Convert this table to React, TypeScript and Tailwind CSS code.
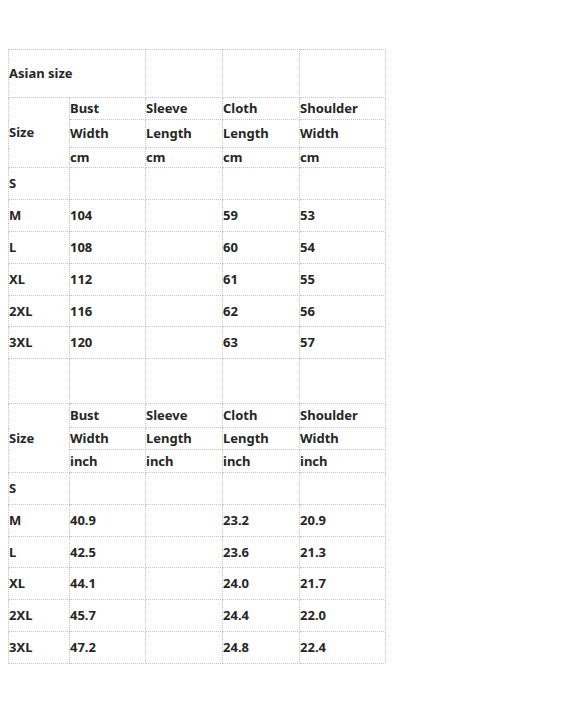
const cm = [
  ["S", "", "", "", ""],
  ["M", "104", "", "59", "53"],
  ["L", "108", "", "60", "54"],
  ["XL", "112", "", "61", "55"],
  ["2XL", "116", "", "62", "56"],
  ["3XL", "120", "", "63", "57"],
]

const inch = [
  ["S", "", "", "", ""],
  ["M", "40.9", "", "23.2", "20.9"],
  ["L", "42.5", "", "23.6", "21.3"],
  ["XL", "44.1", "", "24.0", "21.7"],
  ["2XL", "45.7", "", "24.4", "22.0"],
  ["3XL", "47.2", "", "24.8", "22.4"],
]

const cm_h = ["h-[32px]", "h-[32px]", "h-[32px]", "h-[32px]", "h-[31px]", "h-[32px]"]
const inch_h = ["h-[32px]", "h-[32px]", "h-[31px]", "h-[32px]", "h-[32px]", "h-[32px]"]

const td = "border border-dotted border-[#c4c4c4] p-0 align-middle text-left"

function Header({ unit, hs }: { unit: string; hs: string[] }) {
  return (
    <>
      <tr className={hs[0]}>
        <td rowSpan={3} className={td}>Size</td>
        <td className={td}>Bust</td>
        <td className={td}>Sleeve</td>
        <td className={td}>Cloth</td>
        <td className={td}>Shoulder</td>
      </tr>
      <tr className={hs[1]}>
        <td className={td}>Width</td>
        <td className={td}>Length</td>
        <td className={td}>Length</td>
        <td className={td}>Width</td>
      </tr>
      <tr className={hs[2]}>
        <td className={td}>{unit}</td>
        <td className={td}>{unit}</td>
        <td className={td}>{unit}</td>
        <td className={td}>{unit}</td>
      </tr>
    </>
  )
}

function Rows({ rows, hs }: { rows: string[][]; hs: string[] }) {
  return (
    <>
      {rows.map((r, i) => (
        <tr key={i} className={hs[i]}>
          {r.map((c, j) => (
            <td key={j} className={td}>{c}</td>
          ))}
        </tr>
      ))}
    </>
  )
}

export default function App() {
  return (
    <div className="min-h-[705px] bg-white pl-2 pt-[49px] font-['Noto_Sans',sans-serif] text-[13px] font-bold leading-none text-[#262626]">
      <table className="border-collapse table-fixed w-[377px]">
        <colgroup>
          <col className="w-[61px]" />
          <col className="w-[76px]" />
          <col className="w-[77px]" />
          <col className="w-[77px]" />
          <col className="w-[86px]" />
        </colgroup>
        <tbody>
          <tr className="h-[48px]">
            <td colSpan={2} className={td}>Asian size</td>
            <td className={td}></td>
            <td className={td}></td>
            <td className={td}></td>
          </tr>
          <Header unit="cm" hs={["h-[22px]", "h-[28px]", "h-[20px]"]} />
          <Rows rows={cm} hs={cm_h} />
          <tr className="h-[45px]">
            <td className={td}></td>
            <td className={td}></td>
            <td className={td}></td>
            <td className={td}></td>
            <td className={td}></td>
          </tr>
          <Header unit="inch" hs={["h-[24px]", "h-[22px]", "h-[23px]"]} />
          <Rows rows={inch} hs={inch_h} />
        </tbody>
      </table>
    </div>
  )
}
